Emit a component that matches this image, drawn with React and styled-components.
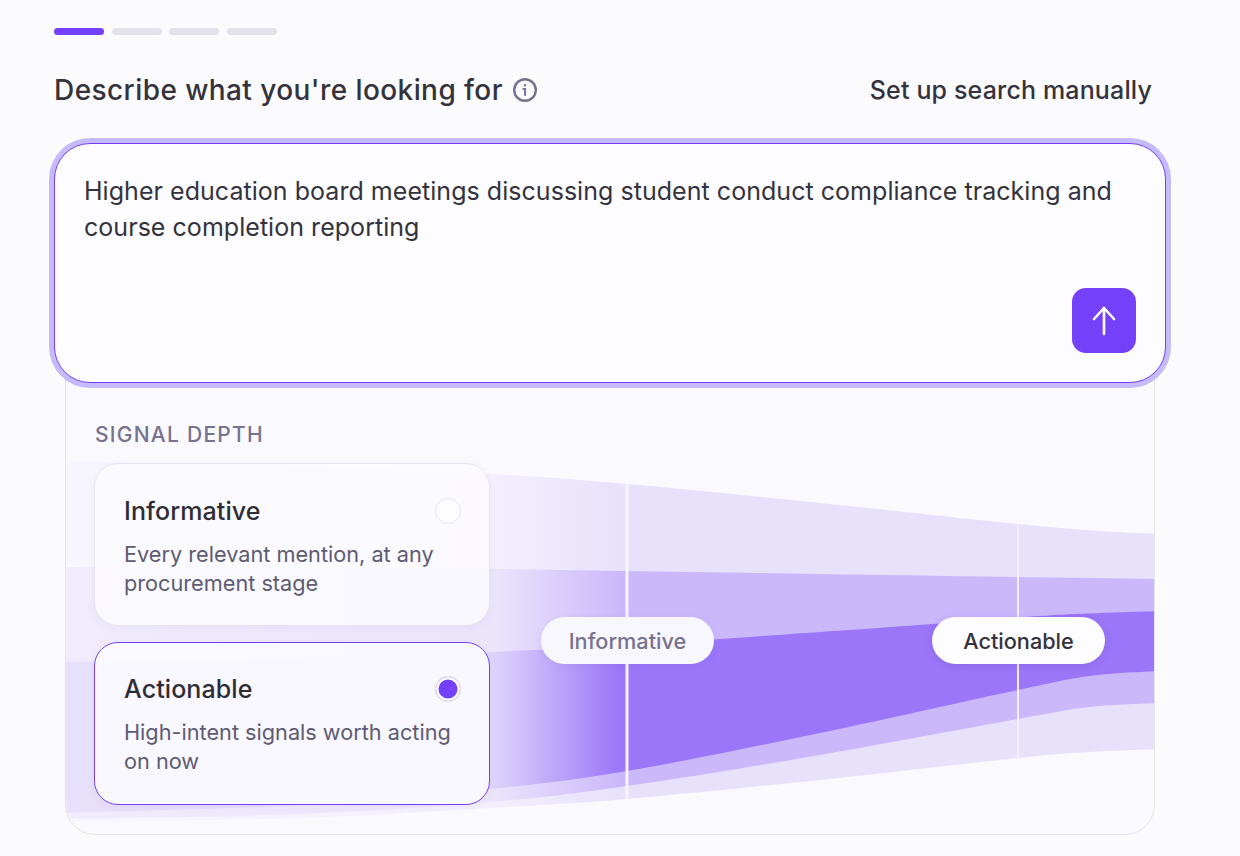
import styled, { createGlobalStyle } from 'styled-components';

const GlobalStyle = createGlobalStyle`
    html, body {
        margin: 0;
        padding: 0;
        background: #fbfbfd;
        font-family: "Inter", "Liberation Sans", sans-serif;
        color: #2e2d36;
    }
`

const steps = [true, false, false, false];

const cards = [
    { id: 'informative', title: 'Informative', text: 'Every relevant mention, at any procurement stage', selected: false },
    { id: 'actionable', title: 'Actionable', text: 'High-intent signals worth acting on now', selected: true },
];

// edges of the funnel bands, in page coordinates
const edges = {
    lightTop: [[60, 462], [300, 468], [490, 475], [627, 485], [820, 504], [1018, 525], [1100, 532], [1160, 535]],
    midTop: [[60, 568], [300, 569], [490, 570], [627, 572], [820, 575], [1018, 578], [1160, 580]],
    darkTop: [[60, 663], [300, 660], [490, 653], [627, 646], [820, 633], [932, 625], [1040, 617], [1100, 614], [1160, 612]],
    darkBottom: [[60, 814], [300, 806], [490, 790], [627, 772], [820, 734], [1018, 691], [1090, 677], [1160, 672]],
    midBottom: [[60, 820], [300, 815], [490, 803], [627, 787], [820, 756], [1018, 720], [1090, 708], [1160, 704]],
    lightBottom: [[60, 823], [300, 819], [490, 809], [627, 800], [820, 781], [1018, 759], [1090, 753], [1160, 750]],
};

function curve(points) {
    let d = '';
    for (let i = 0; i < points.length - 1; i++) {
        const p0 = points[Math.max(i - 1, 0)];
        const p1 = points[i];
        const p2 = points[i + 1];
        const p3 = points[Math.min(i + 2, points.length - 1)];
        const c1 = [p1[0] + (p2[0] - p0[0]) / 6, p1[1] + (p2[1] - p0[1]) / 6];
        const c2 = [p2[0] - (p3[0] - p1[0]) / 6, p2[1] - (p3[1] - p1[1]) / 6];
        d += `C${c1[0]} ${c1[1]} ${c2[0]} ${c2[1]} ${p2[0]} ${p2[1]}`;
    }
    return d;
}

function band(top, bottom) {
    const back = [...bottom].reverse();
    return `M${top[0][0]} ${top[0][1]}${curve(top)}L${back[0][0]} ${back[0][1]}${curve(back)}Z`;
}

const Funnel = () => (
    <Chart viewBox="66 455 1088 380" aria-hidden="true">
        <defs>
            <linearGradient id="fadeLight" gradientUnits="userSpaceOnUse" x1="66" x2="620" y1="0" y2="0">
                <stop offset="0" stopColor="#f7f5fe" />
                <stop offset="0.77" stopColor="#f3effd" />
                <stop offset="1" stopColor="#e8e1fc" />
            </linearGradient>
            <linearGradient id="fadeMid" gradientUnits="userSpaceOnUse" x1="66" x2="620" y1="0" y2="0">
                <stop offset="0" stopColor="#f0ecfd" />
                <stop offset="0.77" stopColor="#ebe5fc" />
                <stop offset="1" stopColor="#cbb8fb" />
            </linearGradient>
            <linearGradient id="fadeDark" gradientUnits="userSpaceOnUse" x1="66" x2="620" y1="0" y2="0">
                <stop offset="0" stopColor="#e7e1fb" />
                <stop offset="0.76" stopColor="#e0d8fc" />
                <stop offset="0.86" stopColor="#c4b0fa" />
                <stop offset="1" stopColor="#9b76f8" />
            </linearGradient>
        </defs>
        <path d={band(edges.lightTop, edges.lightBottom)} fill="url(#fadeLight)" />
        <path d={band(edges.midTop, edges.midBottom)} fill="url(#fadeMid)" />
        <path d={band(edges.darkTop, edges.darkBottom)} fill="url(#fadeDark)" />
        <line x1="627" x2="627" y1="485" y2="800" stroke="#f6f3ff" strokeWidth="3" />
        <line x1="1018" x2="1018" y1="525" y2="760" stroke="#f3efff" strokeWidth="2" />
    </Chart>
);

const InfoIcon = () => (
    <svg width="26" height="26" viewBox="0 0 26 26" fill="none" stroke="#76728f" strokeWidth="2.4" strokeLinecap="round">
        <circle cx="13" cy="13" r="10.8" />
        <path d="M11.4 12h1.7v6" strokeWidth="2" />
        <circle cx="13" cy="8.2" r="0.5" strokeWidth="1.6" />
    </svg>
);

const ArrowIcon = () => (
    <svg width="28" height="30" viewBox="0 0 28 30" fill="none" stroke="#fff" strokeWidth="2.6" strokeLinecap="round" strokeLinejoin="round">
        <path d="M14 28V2" />
        <path d="M4 13 14 2l10 11" />
    </svg>
);

const App = () => (
    <Page>
        <GlobalStyle />
        <Progress>
            {steps.map((active, i) => <Step key={i} $active={active} />)}
        </Progress>
        <Header>
            <Title>Describe what you're looking for <InfoIcon /></Title>
            <ManualLink>Set up search manually</ManualLink>
        </Header>
        <Prompt>
            <PromptText>Higher education board meetings discussing student conduct compliance tracking and course completion reporting</PromptText>
            <SendButton aria-label="Submit"><ArrowIcon /></SendButton>
        </Prompt>
        <Panel>
            <Funnel />
            <PanelLabel>SIGNAL DEPTH</PanelLabel>
            <CardList>
                {cards.map((card) => (
                    <Card key={card.id} $selected={card.selected}>
                        <CardHead>
                            <CardTitle>{card.title}</CardTitle>
                            <Radio $selected={card.selected} />
                        </CardHead>
                        <CardText>{card.text}</CardText>
                    </Card>
                ))}
            </CardList>
            <StagePill $left={475} $active={false}>Informative</StagePill>
            <StagePill $left={866} $active={true}>Actionable</StagePill>
        </Panel>
    </Page>
);

export default App;

const Page = styled.div`
    width: 1240px;
    height: 856px;
    box-sizing: border-box;
    padding: 28px 0 0 54px;
    overflow: hidden;
`

const Progress = styled.div`
    display: flex;
    gap: 7.3px;
`

const Step = styled.span`
    width: 50.3px;
    height: 7px;
    border-radius: 4px;
    background: ${(p) => (p.$active ? '#7540f9' : '#e3e2ea')};
`

const Header = styled.div`
    display: flex;
    align-items: center;
    justify-content: space-between;
    width: 1098px;
    height: 40px;
    margin-top: 35px;
`

const Title = styled.h1`
    display: flex;
    align-items: center;
    gap: 9px;
    margin: 0;
    font-size: 28px;
    font-weight: 450;
    letter-spacing: 0.42px;
    color: #34333d;
`

const ManualLink = styled.a`
    font-size: 25px;
    font-weight: 450;
    letter-spacing: 0.15px;
    margin-top: -1px;
    color: #34333d;
`

const Prompt = styled.div`
    position: relative;
    z-index: 2;
    box-sizing: border-box;
    width: 1112px;
    height: 240px;
    margin-top: 33px;
    padding: 29px 29px;
    border: 1.5px solid #7540f5;
    border-radius: 36px;
    background: #fdfcff;
    box-shadow: 0 0 0 5px #c6bafa;
`

const PromptText = styled.div`
    font-size: 25px;
    line-height: 36px;
    letter-spacing: 0.04px;
    font-weight: 380;
    color: #34333d;
`

const SendButton = styled.button`
    position: absolute;
    right: 29px;
    bottom: 29px;
    display: flex;
    align-items: center;
    justify-content: center;
    width: 64px;
    height: 65px;
    padding: 0;
    border: none;
    border-radius: 14px;
    background: #7540f9;
`

const Panel = styled.section`
    position: relative;
    box-sizing: border-box;
    width: 1090px;
    height: 465px;
    margin: -13px 0 0 11px;
    padding: 51px 28px 0;
    border: 1px solid #e4e3ea;
    border-radius: 0 0 30px 30px;
    background: #faf9fe;
    overflow: hidden;
`

const Chart = styled.svg`
    position: absolute;
    left: 0;
    bottom: 0;
    width: 1088px;
    height: 380px;
`

const PanelLabel = styled.div`
    position: relative;
    padding-left: 1px;
    font-size: 21px;
    line-height: 26px;
    letter-spacing: 1.25px;
    font-weight: 450;
    color: #76728f;
`

const CardList = styled.div`
    position: relative;
    display: flex;
    flex-direction: column;
    gap: 15.5px;
    width: 396px;
    margin-top: 15px;
`

const Card = styled.div`
    box-sizing: border-box;
    height: 163px;
    padding: 28.75px 28px 0 29px;
    border: 1px solid ${(p) => (p.$selected ? '#7540f5' : '#e6e4ee')};
    border-radius: 24px;
    background: rgba(252, 251, 255, 0.88);
    box-shadow: 0 2px 8px rgba(80, 60, 160, 0.05);
`

const CardHead = styled.div`
    display: flex;
    align-items: center;
    justify-content: space-between;
    height: 36px;
`

const CardTitle = styled.div`
    font-size: 25px;
    font-weight: 450;
    letter-spacing: 0.1px;
    color: #2e2d36;
`

const Radio = styled.span`
    box-sizing: border-box;
    width: 26px;
    height: 26px;
    border: 1px solid #e6e4ee;
    border-radius: 50%;
    background: ${(p) => (p.$selected ? '#7540f9' : '#fdfcff')};
    box-shadow: ${(p) => (p.$selected ? 'inset 0 0 0 2.5px #fdfcff' : 'none')};
`

const CardText = styled.p`
    margin: 11px 0 0;
    font-size: 21.7px;
    line-height: 29px;
    font-weight: 380;
    color: #5e5b73;
`

const StagePill = styled.div`
    position: absolute;
    top: 246px;
    left: ${(p) => p.$left}px;
    box-sizing: border-box;
    width: 173px;
    height: 47px;
    display: flex;
    align-items: center;
    justify-content: center;
    border-radius: 24px;
    font-size: 21.7px;
    font-weight: 450;
    color: ${(p) => (p.$active ? '#34333d' : '#76728f')};
    background: ${(p) => (p.$active ? '#fdfcff' : '#f9f7fe')};
    box-shadow: 0 2px 8px rgba(80, 50, 170, ${(p) => (p.$active ? 0.18 : 0.06)});
`
